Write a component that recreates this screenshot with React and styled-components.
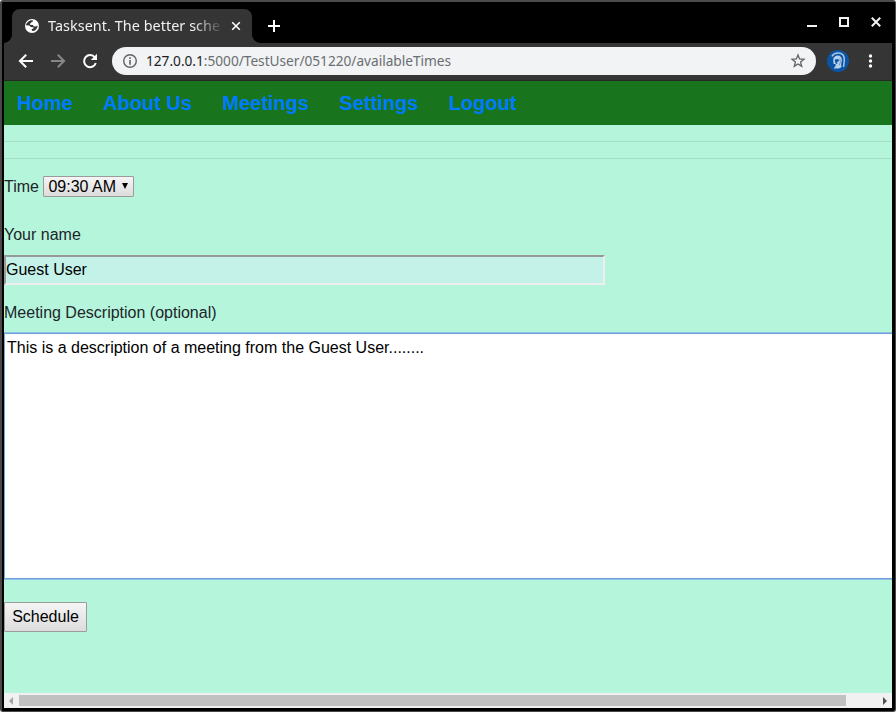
import React from "react";
import styled, { createGlobalStyle } from "styled-components";

const GlobalStyle = createGlobalStyle`
  * { box-sizing: border-box; }
  body { margin: 0; background: #fff; overflow: hidden; }
`;

const Window = styled.div`
  width: 896px;
  height: 712px;
  display: flex;
  flex-direction: column;
  background: #000;
  border: 1px solid #484848;
  border-top: 2px solid #4b4b4b;
  border-width: 2px 1px 1px 2px;
  border-radius: 3px;
  padding: 0 3px 3px 2px;
  overflow: hidden;
  font-family: "Liberation Sans", Arial, sans-serif;
`;

const TitleBar = styled.header`
  height: 41px;
  display: flex;
  align-items: flex-end;
`;

const Tab = styled.div`
  position: relative;
  width: 240px;
  height: 34px;
  margin-left: 8px;
  padding: 0 10px 0 12px;
  display: flex;
  align-items: center;
  background: #353535;
  border-radius: 8px 8px 0 0;
  &::before, &::after {
    content: "";
    position: absolute;
    bottom: 0;
    width: 8px;
    height: 8px;
  }
  &::before { left: -8px; background: radial-gradient(circle at 0 0, #000 7.5px, #353535 8px); }
  &::after { right: -8px; background: radial-gradient(circle at 100% 0, #000 7.5px, #353535 8px); }
`;

const TabTitle = styled.span`
  width: 174px;
  margin-left: 8px;
  white-space: nowrap;
  font: 14.4px/20px "Noto Sans", sans-serif;
  letter-spacing: 0.05px;
  color: #f1f1f1;
  mask-image: linear-gradient(to right, #000 145px, transparent 176px);
`;

const Glyph = styled.svg`
  display: block;
  flex: none;
  width: ${(p) => p.$size}px;
  height: ${(p) => p.$size}px;
  margin-left: ${(p) => p.$gap || 0}px;
`;

const NewTab = styled.div`
  height: 34px;
  display: flex;
  align-items: center;
  margin-left: 14px;
`;

const WindowControls = styled.div`
  display: flex;
  align-items: center;
  height: 41px;
  margin-left: auto;
  padding: 0 8px 1px 0;
  gap: 16px;
`;

const Toolbar = styled.div`
  height: 38px;
  display: flex;
  align-items: center;
  padding: 0 13px 2px 14px;
  background: #353535;
  border-bottom: 1px solid #282828;
`;

const AddressBar = styled.div`
  width: 704px;
  height: 28px;
  margin-left: 14px;
  padding: 0 10px;
  display: flex;
  align-items: center;
  background: #f1f3f4;
  border-radius: 14px;
`;

const Url = styled.span`
  flex: 1;
  margin-left: 8px;
  white-space: nowrap;
  font: 13.7px/20px "Noto Sans", sans-serif;
  letter-spacing: -0.02px;
  color: #6b6e72;
  b { font-weight: 400; color: #202124; }
`;

const Nav = styled.nav`
  height: 44px;
  display: flex;
  padding: 0 13px;
  gap: 30.4px;
  background: #18751e;
`;

const NavLink = styled.a`
  font-size: 20px;
  font-weight: 700;
  line-height: 44px;
  color: #007bff;
`;

const Page = styled.main`
  height: 568px;
  display: flex;
  flex-direction: column;
  align-items: flex-start;
  overflow: hidden;
  background: #b5f5dc;
  color: #212529;
  font-size: 16px;
  line-height: 24px;
`;

const Rule = styled.hr`
  width: 100%;
  margin: 16px 0 0;
  border: 0;
  border-top: 1px solid #a3ddc6;
`;

const TimeRow = styled.div`
  display: flex;
  align-items: center;
  gap: 4px;
  height: 24px;
  margin-top: 16px;
`;

const TimeSelect = styled.div`
  width: 91px;
  height: 21px;
  margin-bottom: 1px;
  padding: 0 5px 0 4.5px;
  display: flex;
  align-items: center;
  justify-content: space-between;
  border: 1px solid #9b9b9b;
  border-radius: 1px;
  background: linear-gradient(#f5f5f5, #dcdcdc);
  color: #000;
  line-height: 19px;
`;

const Arrow = styled.svg`
  width: 6px;
  height: 6px;
  margin-bottom: 2px;
`;

const Label = styled.label`
  height: 24px;
  margin-top: ${(p) => p.$top}px;
`;

const NameInput = styled.input`
  width: 601px;
  height: 30px;
  margin: 8px 0 0;
  padding: 0;
  border: 2px solid;
  border-color: #999 #eee #eee #999;
  background: #c4f2e9;
  color: #000;
  font: 16px "Liberation Sans", Arial, sans-serif;
  outline: none;
`;

const Description = styled.textarea`
  display: block;
  flex: none;
  width: 912px;
  height: 248px;
  margin: 7px 0 0;
  padding: 3px 2px 2px;
  resize: none;
  overflow: hidden;
  border: 1px solid #7da4de;
  border-top-color: #8cc4e4;
  border-bottom-color: #8cc4e4;
  box-shadow: inset 0 1px #6f9bdc, inset 0 -1px #6f9bdc;
  outline: none;
  background: #fff;
  color: #000;
  font: 16px/24px "Liberation Sans", Arial, sans-serif;
`;

const ScheduleButton = styled.button`
  width: 83px;
  height: 30px;
  margin: 22px 0 0;
  padding: 0;
  border: 1px solid #9b9b9b;
  border-radius: 1px;
  background: linear-gradient(#f5f5f5, #dcdcdc);
  color: #000;
  font: 16px "Liberation Sans", Arial, sans-serif;
`;

const Scrollbar = styled.div`
  height: 15px;
  display: flex;
  align-items: center;
  justify-content: space-between;
  background: #f1f1f1;
`;

const Thumb = styled.div`
  width: 827px;
  height: 11px;
  margin: 0 auto 0 6px;
  background: #c1c1c1;
`;

const ScrollArrow = styled.svg`
  width: 4px;
  height: 8px;
  margin: 0 ${(p) => (p.$right ? 5 : 0)}px 0 ${(p) => (p.$right ? 0 : 5)}px;
`;

const links = ["Home", "About Us", "Meetings", "Settings", "Logout"];

export default function App() {
  return (
    <>
      <GlobalStyle />
      <Window>
        <TitleBar>
          <Tab>
            <Glyph $size={16} viewBox="0 0 16 16">
              <circle cx="8" cy="8" r="7" fill="#fff" />
              <path d="M8.8 2.2c.4 1.3-.3 1.7-1.5 2-.2 1-1 1.1-1.5 1.4l.2 1.2 2.8.1 1.1 1.6 2.2.1.9-1 .7.3c-.3 2.6-2.4 4.9-5.2 5.2l-.7-.7-.1-1.2 1.9-.9-.1-1.1-2.7-.2-1.5-1.5-3.3-.3c.4-2.9 3.2-5 6.8-5z" fill="#353535" />
            </Glyph>
            <TabTitle>Tasksent. The better sche</TabTitle>
            <Glyph $size={10} $gap={9} viewBox="0 0 10 10" fill="none" stroke="#fff" strokeWidth="1.6">
              <path d="m1.2 1.2 7.6 7.6M8.8 1.2 1.2 8.8" />
            </Glyph>
          </Tab>
          <NewTab>
            <Glyph $size={16} viewBox="0 0 16 16" fill="none" stroke="#fff" strokeWidth="2">
              <path d="M8 2v12M2 8h12" />
            </Glyph>
          </NewTab>
          <WindowControls>
            <Glyph $size={16} viewBox="0 0 16 16"><path d="M3 11h10v2H3z" fill="#f2f2f2" /></Glyph>
            <Glyph $size={16} viewBox="0 0 16 16" fill="none" stroke="#f2f2f2" strokeWidth="2">
              <path d="M4 4h8v8H4z" />
            </Glyph>
            <Glyph $size={16} viewBox="0 0 16 16" fill="none" stroke="#f2f2f2" strokeWidth="2">
              <path d="m3.8 3.8 8.4 8.4M12.2 3.8l-8.4 8.4" />
            </Glyph>
          </WindowControls>
        </TitleBar>
        <Toolbar>
          <Glyph $size={16} viewBox="0 0 16 16" fill="none" stroke="#fff" strokeWidth="2">
            <path d="M15 8H2.5M8.2 1.7 1.9 8l6.3 6.3" />
          </Glyph>
          <Glyph $size={16} $gap={16} viewBox="0 0 16 16" fill="none" stroke="#868686" strokeWidth="2">
            <path d="M1 8h12.5M7.8 1.7 14.1 8l-6.3 6.3" />
          </Glyph>
          <Glyph $size={16} $gap={16} viewBox="0 0 16 16">
            <path d="M12.9 4.5A6 6 0 1 0 13.8 10" fill="none" stroke="#fff" strokeWidth="2" />
            <path d="M15 .8V7H8.8z" fill="#fff" />
          </Glyph>
          <AddressBar>
            <Glyph $size={16} viewBox="0 0 16 16">
              <circle cx="8" cy="8" r="6.3" fill="none" stroke="#5f6368" strokeWidth="1.4" />
              <path d="M7.2 4.3h1.6v1.6H7.2zM7.2 7h1.6v4.7H7.2z" fill="#5f6368" />
            </Glyph>
            <Url><b>127.0.0.1</b>:5000/TestUser/051220/availableTimes</Url>
            <Glyph $size={16} viewBox="0 0 16 16" fill="none" stroke="#5f6368" strokeWidth="1.3">
              <path d="m8 2 1.6 4 4.4.3-3.4 2.8 1.1 4.3L8 11l-3.7 2.4 1.1-4.3L2 6.3 6.4 6z" />
            </Glyph>
          </AddressBar>
          <Glyph $size={22} $gap={11} viewBox="0 0 22 22">
            <circle cx="11" cy="11" r="11" fill="#0b55a4" />
            <path d="M4.8 6.4C6.6 3.7 9.2 2.8 11.8 3.1c3.3.4 5.6 3 5.5 6.8 0 2.8-.7 4.8-.7 7.1" fill="none" stroke="#a9c4e6" strokeWidth="1.5" />
            <path d="M6.2 10C6.2 7 8.4 5.4 10.8 5.4c2.8 0 4.3 2.1 4.1 4.9-.1 2.2-1.4 3.8-.3 6.6L12 18.4H6.6l2.1-2.6-.2-1.7H6.6z" fill="#b9d0ec" />
            <path d="M7.7 9.6 11 9l1.5 1.8-2.2.9-.2 2.6-1.6-1.1z" fill="#0b55a4" />
            <path d="m12.8 8.2.7 3.4-1.2 3.6" fill="none" stroke="#5a8cc6" strokeWidth=".8" />
          </Glyph>
          <Glyph $size={16} $gap={14} viewBox="0 0 16 16" fill="#fff">
            <circle cx="7.5" cy="3" r="1.7" />
            <circle cx="7.5" cy="8" r="1.7" />
            <circle cx="7.5" cy="13" r="1.7" />
          </Glyph>
        </Toolbar>
        <Nav>
          {links.map((name) => <NavLink key={name}>{name}</NavLink>)}
        </Nav>
        <Page>
          <Rule />
          <Rule />
          <TimeRow>
            <span>Time</span>
            <TimeSelect>
              09:30 AM
              <Arrow viewBox="0 0 6 6"><path d="M0 0h6L3 6z" /></Arrow>
            </TimeSelect>
          </TimeRow>
          <Label $top={24}>Your name</Label>
          <NameInput defaultValue="Guest User" />
          <Label $top={16}>Meeting Description (optional)</Label>
          <Description defaultValue="This is a description of a meeting from the Guest User........" />
          <ScheduleButton>Schedule</ScheduleButton>
        </Page>
        <Scrollbar>
          <ScrollArrow viewBox="0 0 4 8"><path d="M4 0v8L0 4z" fill="#a3a3a3" /></ScrollArrow>
          <Thumb />
          <ScrollArrow $right viewBox="0 0 4 8"><path d="M0 0v8l4-4z" fill="#505050" /></ScrollArrow>
        </Scrollbar>
      </Window>
    </>
  );
}
